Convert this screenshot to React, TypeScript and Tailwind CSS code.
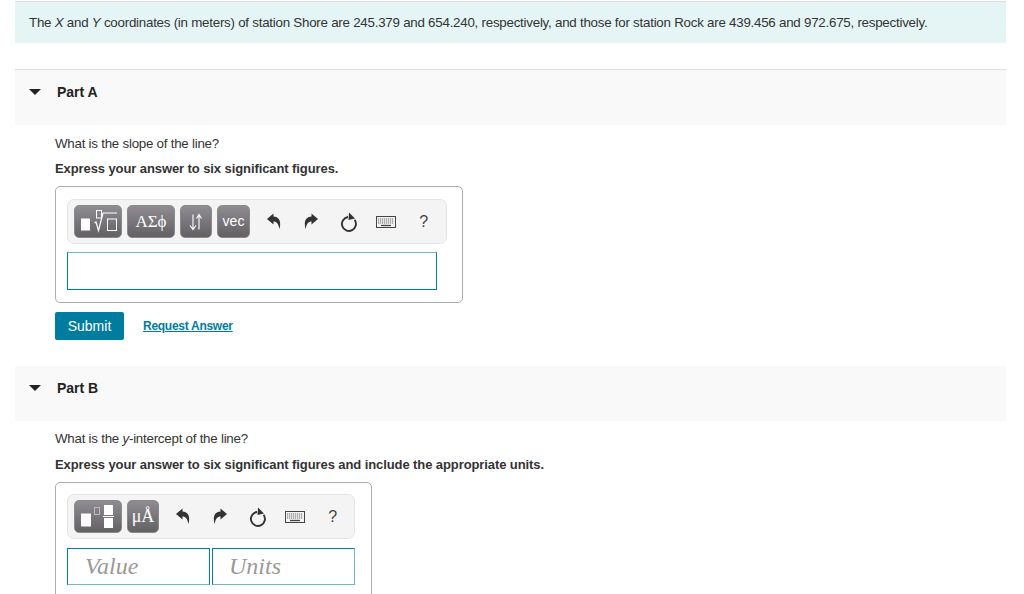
import React from 'react';

const font = { fontFamily: '"Liberation Sans", Arial, sans-serif' };

const btn =
  'h-[33px] flex items-center justify-center rounded-[5px] border border-[#8a8a8a] bg-gradient-to-b from-[#8f8d92] to-[#636164] text-white shrink-0';

const Undo = () => (
  <svg width="14" height="16" viewBox="0 0 14 16">
    <path d="M0 6 L6.5 0.5 V3.5 C11.5 3.7 14.5 7.5 12.6 15.5 H12.2 C11.6 11 9.5 8.5 6.5 8.5 V11.5 Z" fill="#333" />
  </svg>
);

const Redo = () => (
  <svg width="14" height="16" viewBox="0 0 14 16">
    <path d="M14 6 L7.5 0.5 V3.5 C2.5 3.7 -0.5 7.5 1.4 15.5 H1.8 C2.4 11 4.5 8.5 7.5 8.5 V11.5 Z" fill="#333" />
  </svg>
);

const Reset = () => (
  <svg width="18" height="20" viewBox="0 0 18 20">
    <path d="M8 5 A7 7 0 1 0 14.6 7.8" fill="none" stroke="#333" strokeWidth="1.9" />
    <path d="M9 0.5 L15 6.5 L8.5 8 Z" fill="#333" />
  </svg>
);

const Keyboard = () => (
  <svg width="20" height="12" viewBox="0 0 20 12">
    <rect x="0.5" y="0.5" width="19" height="11" fill="#f4f4f4" stroke="#444" />
    <path d="M2 3h16M2 5h16M2 7h16" stroke="#666" strokeWidth="1.1" strokeDasharray="1.2 0.8" />
    <path d="M5 9.5h10" stroke="#444" strokeWidth="1.3" />
  </svg>
);

const ToolIcons = () => (
  <div className="flex items-center">
    <div className="w-[37.5px] flex justify-center mb-[2px]"><Undo /></div>
    <div className="w-[37.5px] flex justify-center mb-[2px]"><Redo /></div>
    <div className="w-[37.5px] flex justify-center"><Reset /></div>
    <div className="w-[37.5px] flex justify-center"><Keyboard /></div>
    <div className="w-[37.5px] flex justify-center text-[16px] text-[#444]">?</div>
  </div>
);

const RootIcon = () => (
  <svg width="44" height="26" viewBox="0 0 44 26">
    <rect x="5" y="9.5" width="9" height="12" fill="#fff" />
    <rect x="20.5" y="1.5" width="5" height="7.5" fill="none" stroke="#fff" />
    <path d="M18.5 14 L20 13 L22.5 21.5 L27 4 H41" fill="none" stroke="#fff" strokeWidth="1.2" />
    <rect x="31.5" y="10" width="9" height="11.5" fill="none" stroke="#fff" />
  </svg>
);

const SortIcon = () => (
  <svg width="16" height="18" viewBox="0 0 16 18">
    <path d="M5 1.5 V16 M2 12.5 L5 16.5 L8 12.5" fill="none" stroke="#fff" strokeWidth="1.1" />
    <path d="M11 16.5 V2 M8.5 5.5 L11 1.5 L13.5 5.5" fill="none" stroke="#fff" strokeWidth="1.1" />
  </svg>
);

const FractionIcon = () => (
  <svg width="44" height="26" viewBox="0 0 44 26">
    <rect x="5" y="9.5" width="10" height="13" fill="#fff" />
    <rect x="18.5" y="3.5" width="5" height="7" fill="none" stroke="#bbb" />
    <rect x="28" y="1" width="9" height="10" fill="#fff" />
    <rect x="27" y="12" width="11" height="1" fill="#fff" />
    <rect x="28" y="14" width="9" height="10" fill="#fff" />
  </svg>
);

const PartHeader = ({ label }: { label: string }) => (
  <div className="h-[55px] bg-[#f9f9f9] flex items-start pt-[14px] pl-[14px]">
    <div className="w-[28px] h-[16px] flex items-center">
      <div className="w-0 h-0 border-l-[6px] border-r-[6px] border-t-[6px] border-l-transparent border-r-transparent border-t-[#222]" />
    </div>
    <span className="text-[14px] font-bold text-[#222] leading-[16px]">{label}</span>
  </div>
);

export default function App() {
  return (
    <div className="w-[1024px] h-[594px] overflow-hidden bg-white pl-[15px] pr-[18px] pt-px text-[#333]" style={font}>
      <div className="h-[42px] bg-[#e5f5f6] border-t border-[#dedede] pl-[14px] pt-[12px] text-[13.33px] leading-[17px] tracking-[-0.24px] text-[#333] whitespace-nowrap">
        The <i>X</i> and <i>Y</i> coordinates (in meters) of station Shore are 245.379 and 654.240, respectively, and those for station Rock are 439.456 and 972.675, respectively.
      </div>

      <div className="mt-[26px] border-t border-[#dedede]">
        <PartHeader label="Part A" />
      </div>

      <div className="pl-[40px]">
        <p className="mt-[10px] text-[13.33px] leading-[17px] tracking-[-0.24px]">What is the slope of the line?</p>
        <p className="mt-[8px] text-[13px] leading-[17px] font-bold tracking-[-0.09px]">Express your answer to six significant figures.</p>

        <div className="mt-[9px] w-[408px] h-[117px] rounded-[5px] border border-[#ababab] pl-[11px] pt-[12px]">
          <div className="w-[380px] h-[45px] rounded-[7px] border border-[#e4e4e4] bg-[#f4f4f4] flex items-center pl-[6px] gap-[5px]">
            <div className={`${btn} w-[48px]`}><RootIcon /></div>
            <div className={`${btn} w-[48px] text-[17px]`} style={{ fontFamily: '"Liberation Serif", serif' }}>ΑΣϕ</div>
            <div className={`${btn} w-[32px]`}><SortIcon /></div>
            <div className={`${btn} w-[33px] text-[14px]`}>vec</div>
            <ToolIcons />
          </div>
          <div className="mt-[8px] w-[370px] h-[38px] border border-[#007c9f] border-t-[#6fb6c9]" />
        </div>

        <div className="mt-[9px] flex items-center">
          <div className="w-[69px] h-[28px] rounded-[2px] bg-[#007c9f] text-white text-[14px] flex items-center justify-center">Submit</div>
          <span className="ml-[19px] text-[12px] font-bold text-[#007c9f] underline tracking-[-0.28px]">Request Answer</span>
        </div>
      </div>

      <div className="mt-[26px]">
        <PartHeader label="Part B" />
      </div>

      <div className="pl-[40px]">
        <p className="mt-[9px] text-[13.33px] leading-[17px] tracking-[-0.24px]">What is the <i>y</i>-intercept of the line?</p>
        <p className="mt-[9px] text-[13px] leading-[17px] font-bold tracking-[-0.09px]">Express your answer to six significant figures and include the appropriate units.</p>

        <div className="mt-[9px] w-[317px] h-[130px] rounded-[5px] border border-[#ababab] pl-[11px] pt-[11px]">
          <div className="w-[288px] h-[45px] rounded-[7px] border border-[#e4e4e4] bg-[#f4f4f4] flex items-center pl-[6px] gap-[5px]">
            <div className={`${btn} w-[48px]`}><FractionIcon /></div>
            <div className={`${btn} w-[32px] text-[18px]`} style={{ fontFamily: '"Liberation Serif", serif' }}>μÅ</div>
            <ToolIcons />
          </div>
          <div className="mt-[9px] flex gap-[2px]" style={{ fontFamily: '"Liberation Serif", serif' }}>
            <div className="w-[143px] h-[37px] border border-[#007c9f] border-b-[#6fb6c9] pl-[17px] text-[24px] italic leading-[35px] text-[#999]">Value</div>
            <div className="w-[143px] h-[37px] border border-[#007c9f] border-b-[#6fb6c9] border-r-[#6fb6c9] pl-[16px] text-[24px] italic leading-[35px] text-[#999]">Units</div>
          </div>
        </div>
      </div>
    </div>
  );
}
